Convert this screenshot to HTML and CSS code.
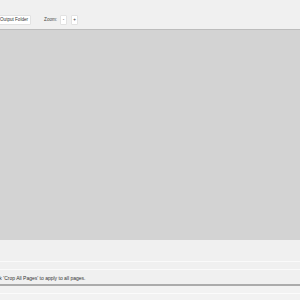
FILE: index.html
```html
<!DOCTYPE html>
<html lang="en">
<head>
  <meta charset="UTF-8" />
  <meta name="viewport" content="width=device-width, initial-scale=1.0" />
  <title>PDF Cropper</title>
  <link rel="stylesheet" href="styles.css">
</head>
<body>
  <div class="app">
    <div class="toolbar">
      <button class="btn btn-folder">Output Folder</button>
      <span class="zoom-label">Zoom:</span>
      <button class="btn btn-small">-</button>
      <button class="btn btn-small">+</button>
    </div>

    <div class="canvas"></div>

    <div class="panel">
      <div class="panel-rule"></div>
      <div class="panel-rule"></div>
      <div class="hint">Click 'Crop All Pages' to apply to all pages.</div>
    </div>

    <div class="footer">
      <div class="footer-rule"></div>
    </div>
  </div>
</body>
</html>
```

FILE: styles.css
```css
body {
  margin: 0;
  padding: 0;
  font-family: 'Liberation Sans', Arial, sans-serif;
  background: #f0f0f0;
  color: #333;
  overflow: hidden;
}
.app {
  display: flex;
  flex-direction: column;
  height: 300px;
}
.toolbar {
  height: 30px;
  box-sizing: border-box;
  padding-top: 10px;
  display: flex;
  align-items: center;
  background: #f0f0f0;
  border-bottom: 1px solid #bcbcbc;
}
.btn {
  height: 10px;
  padding: 0 2px;
  font-family: inherit;
  font-size: 4.6px;
  color: #333;
  background: #fff;
  border: 1px solid #e2e2e2;
  border-radius: 1px;
  line-height: 8px;
  white-space: nowrap;
}
.btn-folder {
  margin-left: -3px;
}
.zoom-label {
  font-size: 4.6px;
  margin-left: 13px;
  margin-right: 3px;
  color: #444;
}
.btn-small {
  width: 7px;
  padding: 0;
  margin-right: 4px;
}
.canvas {
  height: 210px;
  background: #d3d3d3;
}
.panel {
  height: 46px;
  box-sizing: border-box;
  padding-top: 21px;
  background: #f0f0f0;
  border-bottom: 2px solid #ababab;
}
.panel-rule {
  height: 1px;
  background: #fafafa;
  margin-bottom: 7px;
}
.hint {
  font-size: 5px;
  line-height: 6px;
  margin-left: -9px;
  margin-top: -2px;
  white-space: nowrap;
  color: #333;
}
.footer {
  flex: 1;
  background: #f2f2f2;
  padding-top: 7px;
}
.footer-rule {
  height: 1px;
  background: #fbfbfb;
}
```
